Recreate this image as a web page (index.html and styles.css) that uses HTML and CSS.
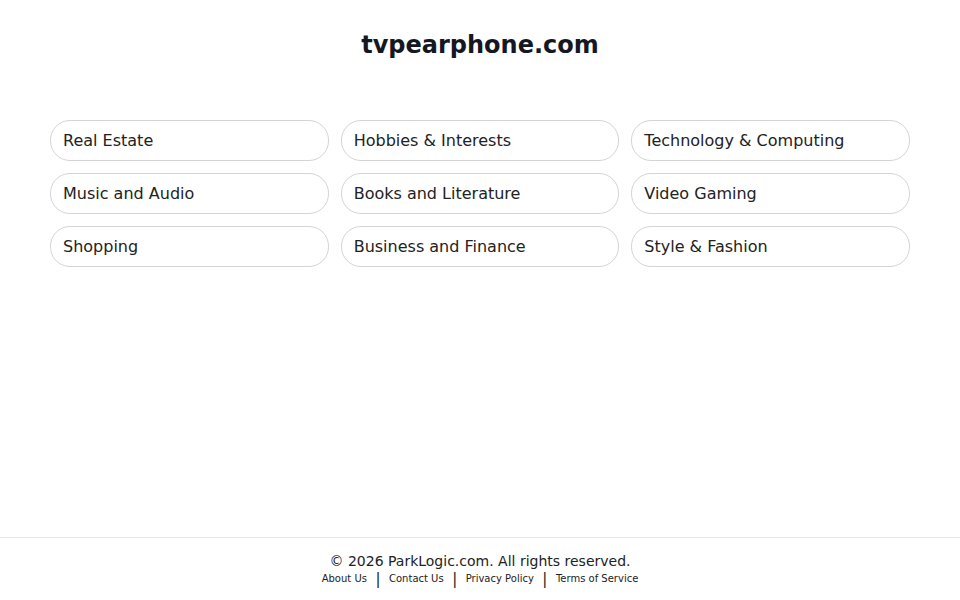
FILE: index.html
```html
<!DOCTYPE html>
<html lang="en">
<head>
    <meta charset="UTF-8">
    <meta name="viewport" content="width=device-width, initial-scale=1.0">
    <title>tvpearphone.com</title>
    <link rel="stylesheet" href="styles.css">
</head>
<body>
    <div class="page">
        <header class="header">
            <h1 class="domain">tvpearphone.com</h1>
        </header>
        <main class="topics">
            <a class="topic" href="#">Real Estate</a>
            <a class="topic" href="#">Hobbies &amp; Interests</a>
            <a class="topic" href="#">Technology &amp; Computing</a>
            <a class="topic" href="#">Music and Audio</a>
            <a class="topic" href="#">Books and Literature</a>
            <a class="topic" href="#">Video Gaming</a>
            <a class="topic" href="#">Shopping</a>
            <a class="topic" href="#">Business and Finance</a>
            <a class="topic" href="#">Style &amp; Fashion</a>
        </main>
        <footer class="footer">
            <p class="copy">&copy; 2026 ParkLogic.com. All rights reserved.</p>
            <nav class="links">
                <a href="#">About Us</a>
                <span class="sep">|</span>
                <a href="#">Contact Us</a>
                <span class="sep">|</span>
                <a href="#">Privacy Policy</a>
                <span class="sep">|</span>
                <a href="#">Terms of Service</a>
            </nav>
        </footer>
    </div>
</body>
</html>
```
FILE: styles.css
```css
body {
    margin: 0;
    font-family: "DejaVu Sans", sans-serif;
    color: #222;
    background: #fff;
}
.page {
    display: flex;
    flex-direction: column;
    min-height: 100vh;
}
.header {
    padding-top: 31px;
    text-align: center;
}
.domain {
    margin: 0;
    font-size: 24px;
    line-height: 28px;
    font-weight: bold;
    color: #151722;
}
.topics {
    display: grid;
    grid-template-columns: repeat(3, 1fr);
    gap: 12px;
    margin: 61px 50px 0;
    flex: 1;
    align-content: start;
}
.topic {
    display: block;
    height: 39px;
    line-height: 39px;
    padding: 0 12px;
    border: 1px solid #d4d4d4;
    border-radius: 20px;
    font-size: 16px;
    color: #222;
    text-decoration: none;
}
.footer {
    border-top: 1px solid #e6e6e6;
    text-align: center;
    padding: 14px 0 13px;
}
.copy {
    margin: 0;
    font-size: 14px;
    line-height: 18px;
    color: #222;
}
.links {
    display: flex;
    justify-content: center;
    align-items: center;
    gap: 8.5px;
    margin-top: 1px;
    font-size: 10px;
    line-height: 16px;
}
.links a {
    color: #222;
    text-decoration: none;
}
.sep {
    font-size: 15px;
    color: #222;
}
```
